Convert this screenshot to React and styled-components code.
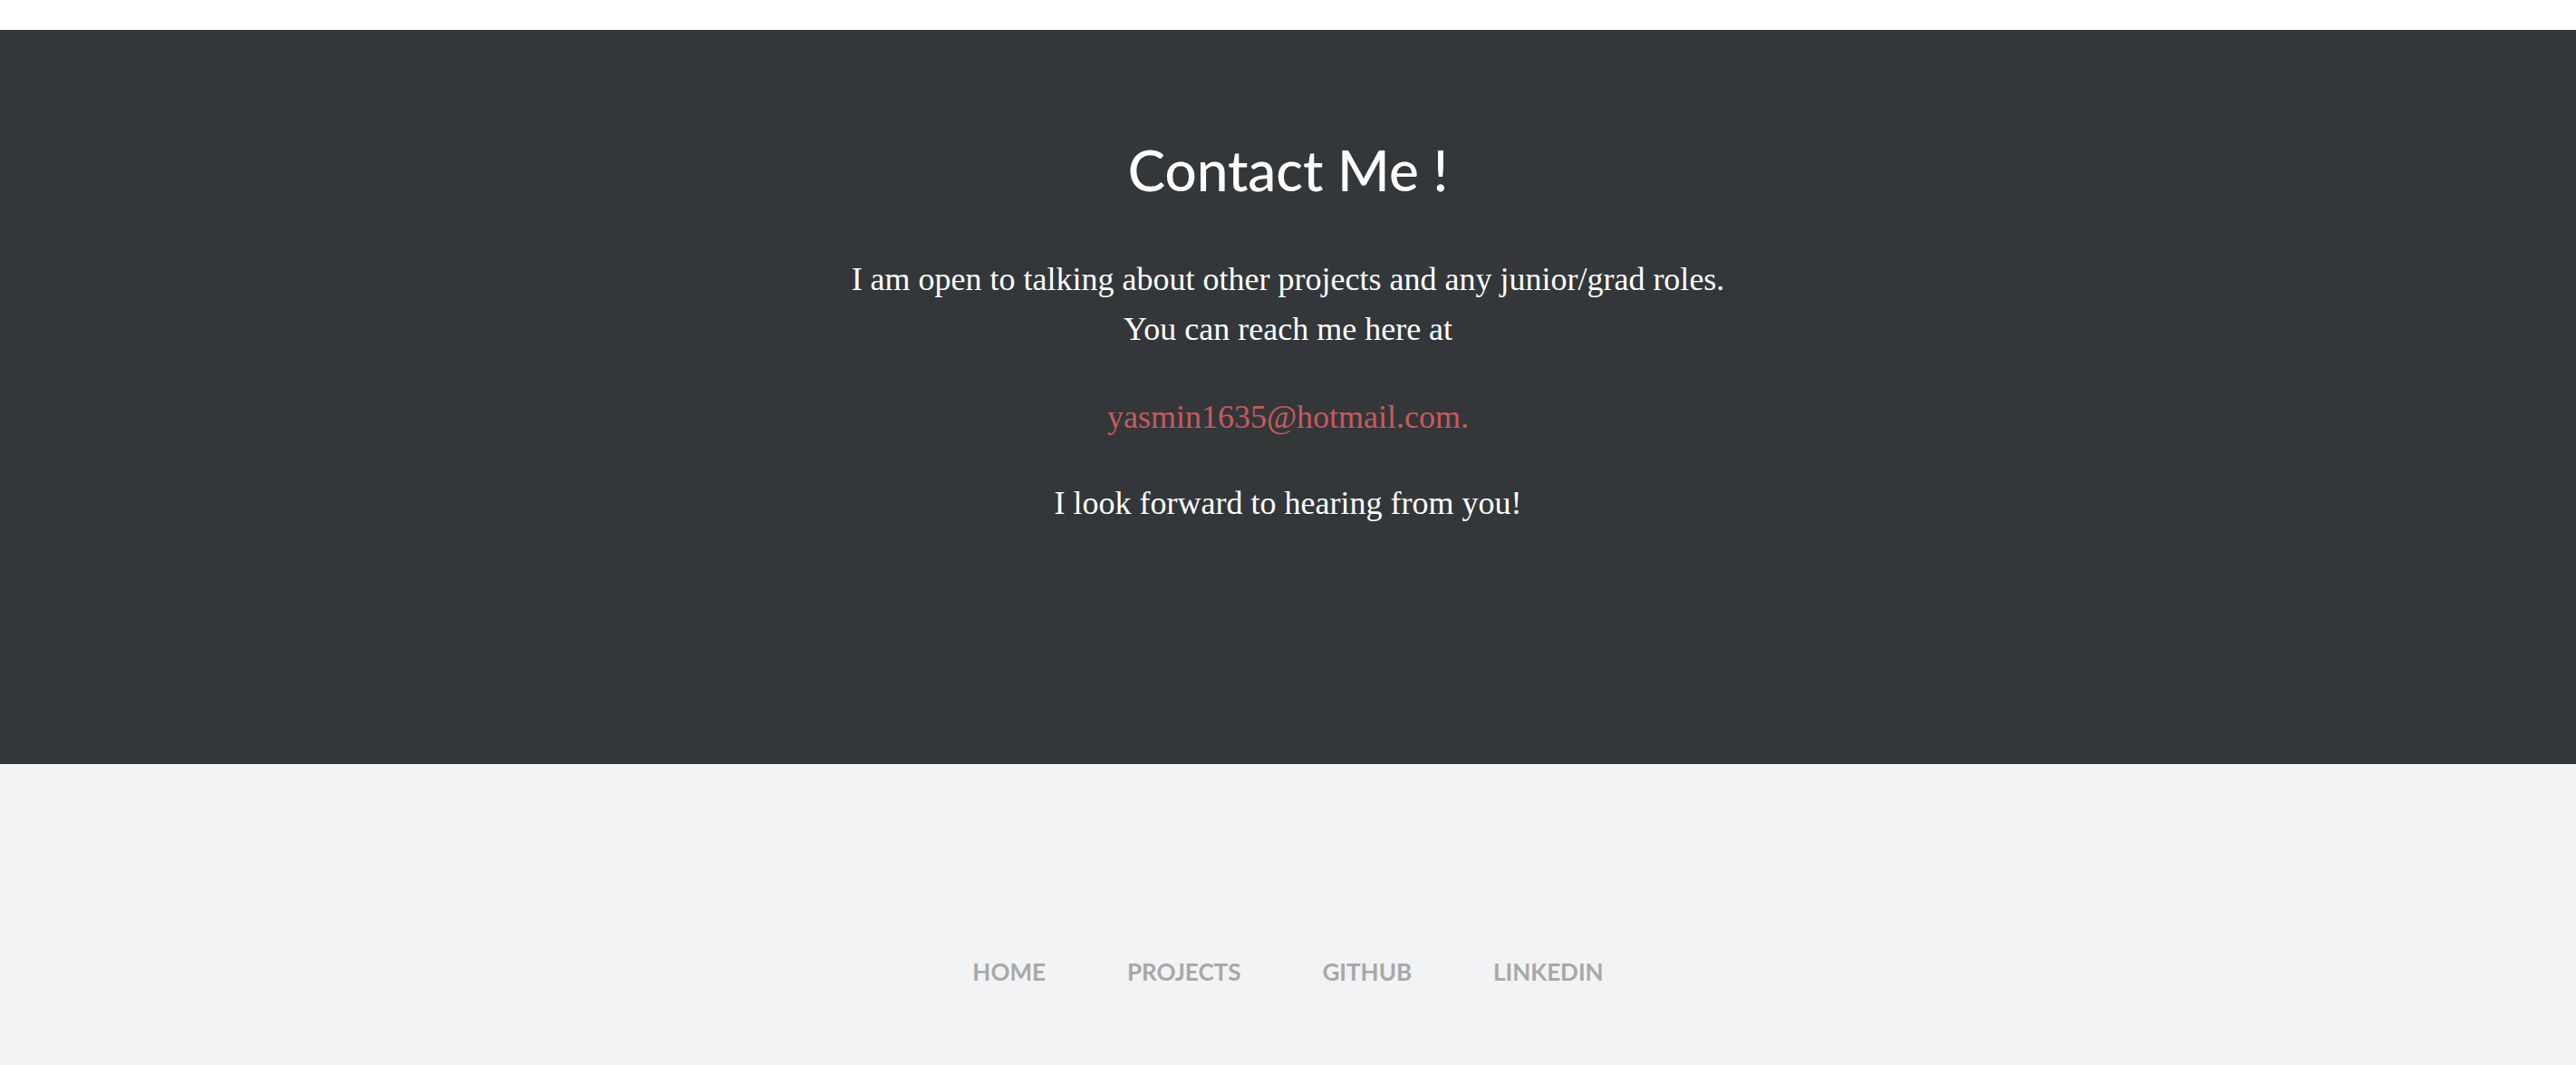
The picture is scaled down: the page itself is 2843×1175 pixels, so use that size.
import React from "react";
import styled, { createGlobalStyle } from "styled-components";

const Global = createGlobalStyle`
  html, body { margin: 0; padding: 0; background: #ffffff; }
  * { box-sizing: border-box; }
`;

const Page = styled.div`
  display: flex;
  flex-direction: column;
  padding-top: 33px;
`;

const ContactSection = styled.section`
  background: #33373a;
  height: 810px;
  display: flex;
  flex-direction: column;
  align-items: center;
  padding-top: 114px;
  text-align: center;
`;

const Title = styled.h2`
  margin: 0;
  font-family: Lato, "Open Sans", sans-serif;
  font-weight: 500;
  font-size: 62px;
  line-height: 80px;
  color: #ffffff;
`;

const Text = styled.p`
  margin: ${(p) => p.$mt || 0}px 0 0;
  font-family: "Liberation Serif", "Times New Roman", serif;
  font-size: 36px;
  line-height: 55px;
  color: ${(p) => (p.$accent ? "#c85a5a" : "#ffffff")};
`;

const Footer = styled.footer`
  background: #f2f3f5;
  height: 332px;
  display: flex;
  justify-content: center;
  padding-top: 213px;
`;

const Nav = styled.nav`
  display: flex;
  gap: 90px;
  align-items: flex-start;
`;

const NavLink = styled.a`
  font-family: Lato, "Open Sans", sans-serif;
  font-weight: 700;
  font-size: 26px;
  line-height: 32px;
  color: #a8a8a8;
  text-decoration: none;
  text-transform: uppercase;
`;

export default function App() {
  return (
    <>
      <Global />
      <Page>
        <ContactSection>
          <Title>Contact Me !</Title>
          <Text $mt={54}>
            I am open to talking about other projects and any junior/grad roles.
            <br />
            You can reach me here at
          </Text>
          <Text $mt={42} $accent>yasmin1635@hotmail.com.</Text>
          <Text $mt={40}>I look forward to hearing from you!</Text>
        </ContactSection>
        <Footer>
          <Nav>
            <NavLink href="#">Home</NavLink>
            <NavLink href="#">Projects</NavLink>
            <NavLink href="#">Github</NavLink>
            <NavLink href="#">Linkedin</NavLink>
          </Nav>
        </Footer>
      </Page>
    </>
  );
}
